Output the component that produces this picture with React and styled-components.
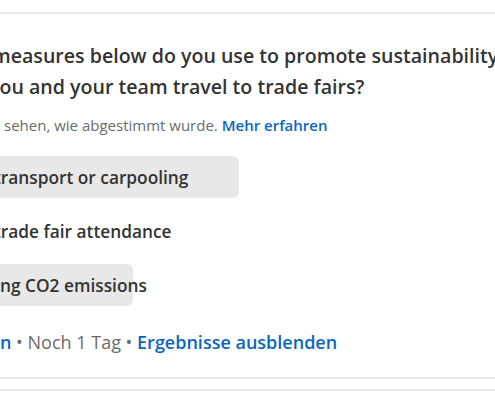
import React from "react";
import styled, { createGlobalStyle } from "styled-components";

const Global = createGlobalStyle`
  html, body { margin: 0; padding: 0; background: #ffffff; }
  body { font-family: "Open Sans", "Noto Sans", "Liberation Sans", sans-serif; }
`;

const Page = styled.div`
  width: 495px;
  height: 400px;
  overflow: hidden;
  background: #ffffff;
  padding-top: 12px;
  box-sizing: border-box;
  display: flex;
  flex-direction: column;
  gap: 10px;
`;

const Card = styled.section`
  flex: none;
  height: ${(p) => p.$height}px;
  box-sizing: border-box;
  border-top: 2px solid #e9e9e9;
  border-bottom: 2px solid #e9e9e9;
  background: #ffffff;
  overflow: hidden;
  display: flex;
  flex-direction: column;
`;

const Question = styled.h2`
  margin: 26px 0 0;
  font-size: 19.6px;
  line-height: 31px;
  font-weight: 600;
  color: #333333;
  white-space: nowrap;
`;

const Line = styled.span`
  display: block;
  margin-left: ${(p) => p.$shift || 0}px;
`;

const Note = styled.p`
  margin: 13px 0 0 ${(p) => p.$shift || 0}px;
  font-size: 15px;
  line-height: 20px;
  color: #6b6b6b;
  white-space: nowrap;
`;

const Link = styled.a`
  color: #0a66c2;
  font-weight: 600;
  text-decoration: none;
`;

const Options = styled.ul`
  list-style: none;
  margin: 21px 0 0;
  padding: 0;
  display: flex;
  flex-direction: column;
  gap: 12px;
`;

const Option = styled.li`
  position: relative;
  height: 42px;
  display: flex;
  align-items: center;
`;

const Fill = styled.div`
  position: absolute;
  left: -12px;
  top: 0;
  bottom: 0;
  border-radius: 6px;
  background: #e8e8e8;
`;

const OptionText = styled.span`
  position: relative;
  margin-left: ${(p) => p.$shift || 0}px;
  font-size: 17.3px;
  font-weight: 600;
  color: #333333;
  white-space: nowrap;
`;

const Footer = styled.div`
  margin: 23px 0 0 ${(p) => p.$shift || 0}px;
  font-size: 18px;
  line-height: 26px;
  color: #6b6b6b;
  white-space: nowrap;
`;

const options = [
  { text: "transport or carpooling", shift: -6, fill: 251 },
  { text: "trade fair attendance", shift: -6, fill: 0 },
  { text: "ng CO2 emissions", shift: 0, fill: 145 },
];

export default function App() {
  return (
    <>
      <Global />
      <Page>
        <Card $height={367}>
          <Question>
            <Line $shift={-8}>measures below do you use to promote sustainability when</Line>
            <Line $shift={-11}>you and your team travel to trade fairs?</Line>
          </Question>
          <Note $shift={4}>
            sehen, wie abgestimmt wurde. <Link href="#">Mehr erfahren</Link>
          </Note>
          <Options>
            {options.map((o) => (
              <Option key={o.text}>
                {o.fill > 0 && <Fill style={{ width: o.fill }} />}
                <OptionText $shift={o.shift}>{o.text}</OptionText>
              </Option>
            ))}
          </Options>
          <Footer>
            <Link href="#">n</Link> • Noch 1 Tag • <Link href="#">Ergebnisse ausblenden</Link>
          </Footer>
        </Card>
        <Card $height={40} />
      </Page>
    </>
  );
}
